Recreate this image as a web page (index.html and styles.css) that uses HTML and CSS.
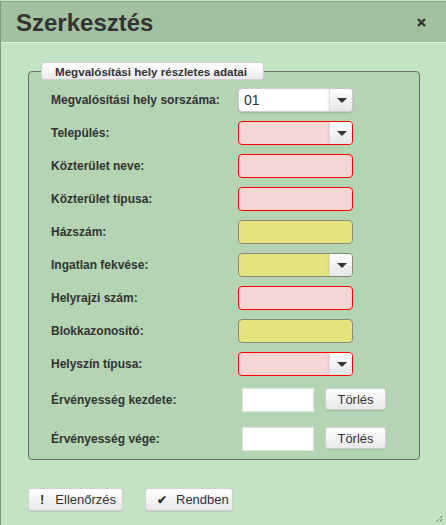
FILE: index.html
```html
<!DOCTYPE html>
<html lang="hu">
<head>
    <meta charset="UTF-8">
    <title>Szerkesztés</title>
    <link rel="stylesheet" href="styles.css">
</head>
<body>
    <div class="dialog">
        <div class="header">
            <h1 class="title">Szerkesztés</h1>
            <span class="close">
                <svg width="9" height="9" viewBox="0 0 9 9"><path d="M1 1L8 8M8 1L1 8" stroke="#333" stroke-width="2.4"/></svg>
            </span>
        </div>
        <div class="content">
            <fieldset class="group">
                <legend class="legend">Megvalósítási hely részletes adatai</legend>
                <div class="row">
                    <label class="label">Megvalósítási hely sorszáma:</label>
                    <div class="field white select"><span class="value">01</span><span class="arrow"></span></div>
                </div>
                <div class="row">
                    <label class="label">Település:</label>
                    <div class="field pink select"><span class="arrow"></span></div>
                </div>
                <div class="row">
                    <label class="label">Közterület neve:</label>
                    <div class="field pink"></div>
                </div>
                <div class="row">
                    <label class="label">Közterület típusa:</label>
                    <div class="field pink"></div>
                </div>
                <div class="row">
                    <label class="label">Házszám:</label>
                    <div class="field yellow"></div>
                </div>
                <div class="row">
                    <label class="label">Ingatlan fekvése:</label>
                    <div class="field yellow select"><span class="arrow"></span></div>
                </div>
                <div class="row">
                    <label class="label">Helyrajzi szám:</label>
                    <div class="field pink"></div>
                </div>
                <div class="row">
                    <label class="label">Blokkazonosító:</label>
                    <div class="field yellow"></div>
                </div>
                <div class="row">
                    <label class="label">Helyszín típusa:</label>
                    <div class="field pink select"><span class="arrow"></span></div>
                </div>
                <div class="row date-row first-date">
                    <label class="label">Érvényesség kezdete:</label>
                    <div class="date"></div>
                    <button class="btn small">Törlés</button>
                </div>
                <div class="row date-row last-date">
                    <label class="label">Érvényesség vége:</label>
                    <div class="date"></div>
                    <button class="btn small">Törlés</button>
                </div>
            </fieldset>
            <div class="actions">
                <button class="btn action"><span class="icon bang">!</span>Ellenőrzés</button>
                <button class="btn action"><span class="icon">&#10004;</span>Rendben</button>
            </div>
        </div>
        <svg class="grip" width="8" height="8" viewBox="0 0 8 8"><path d="M7 1L1 7M7 4L4 7M7 6L6 7" stroke="#444" stroke-width="1" stroke-dasharray="1 1"/></svg>
    </div>
</body>
</html>
```
FILE: styles.css
```css
* {
    margin: 0;
    padding: 0;
    box-sizing: border-box;
}
body {
    font-family: "Liberation Sans", Arial, sans-serif;
    background-color: #c4e2c4;
    color: #333;
    overflow: hidden;
}
.dialog {
    position: relative;
    height: 525px;
    margin-top: 1px;
    border-top: 1px solid #8fa88f;
    border-left: 1px solid #7f9a7f;
    background-color: #c4e2c4;
}
.header {
    height: 41px;
    background-color: #a0c09f;
    border-bottom: 1px solid #e6f2e6;
    display: flex;
    align-items: center;
    justify-content: space-between;
    padding: 0 20px 0 15px;
}
.title {
    font-size: 24px;
    font-weight: bold;
    color: #333;
    margin-top: 2px;
}
.close {
    display: flex;
    margin-top: 1px;
}
.content {
    padding: 19px 0 0 27px;
}
.group {
    width: 392px;
    border: 1px solid #6e6e6e;
    border-radius: 4px;
    background-color: #b4d4b4;
    padding: 8px 10px 8px 22px;
}
.legend {
    margin-left: -10px;
    width: 223px;
    height: 18px;
    line-height: 17px;
    padding-left: 13px;
    font-size: 11.6px;
    font-weight: bold;
    color: #333;
    white-space: nowrap;
    background: linear-gradient(#ffffff, #ebebeb);
    border: 1px solid #cfcfcf;
    border-radius: 3px;
}
.row {
    display: flex;
    align-items: center;
    height: 24px;
    margin-bottom: 9px;
}
.label {
    width: 187px;
    font-size: 12px;
    font-weight: bold;
    color: #333;
}
.field {
    position: relative;
    width: 115px;
    height: 24px;
    border-radius: 4px;
    border: 1px solid #ccc;
}
.white {
    background-color: #fff;
    box-shadow: 0 1px 2px rgba(0, 0, 0, 0.15);
}
.pink {
    background-color: #f4d6d4;
    border-color: #ff0000;
}
.yellow {
    background-color: #e4e47f;
    border-color: #8a8a80;
}
.value {
    display: block;
    font-size: 14px;
    line-height: 22px;
    padding-left: 5px;
    color: #333;
}
.arrow {
    position: absolute;
    right: 0;
    top: 0;
    bottom: 0;
    width: 23px;
    background: linear-gradient(#ffffff, #e6e6e6);
    border-radius: 0 3px 3px 0;
    border-left: 1px solid #e0e0e0;
    box-shadow: -1px 0 2px rgba(0, 0, 0, 0.08);
}
.arrow::after {
    content: "";
    position: absolute;
    left: 7px;
    top: 9px;
    border-left: 5px solid transparent;
    border-right: 5px solid transparent;
    border-top: 5px solid #333;
}
.first-date {
    margin-top: 12px;
    margin-bottom: 15px;
}
.last-date {
    margin-bottom: 0;
}
.date {
    width: 72px;
    height: 24px;
    margin-left: 4px;
    background-color: #fff;
    border: 1px solid #e2e2e2;
}
.btn {
    font-family: "Liberation Sans", Arial, sans-serif;
    font-size: 13px;
    color: #333;
    background: linear-gradient(#ffffff, #e8e8e8);
    border: 1px solid #d0d0d0;
    border-radius: 3px;
    box-shadow: 0 1px 1px rgba(0, 0, 0, 0.1);
}
.small {
    width: 61px;
    height: 22px;
    margin-left: 11px;
    margin-top: -2px;
}
.actions {
    display: flex;
    gap: 22px;
    margin-top: 28px;
}
.action {
    height: 23px;
    padding: 0 11px;
    display: flex;
    align-items: center;
}
.action:first-child {
    width: 95px;
}
.action:last-child {
    width: 88px;
}
.icon {
    font-size: 12px;
    font-weight: bold;
    margin-right: 9px;
}
.bang {
    font-size: 13px;
    margin-right: 11px;
}
.grip {
    position: absolute;
    right: 3px;
    bottom: 3px;
}
```
